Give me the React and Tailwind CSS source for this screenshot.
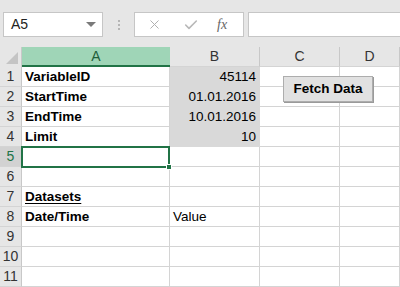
import { X, Check } from "lucide-react";

const cols = [
  { key: "A", w: "w-[148px]" },
  { key: "B", w: "w-[90px]" },
  { key: "C", w: "w-[80px]" },
  { key: "D", w: "w-[60px]" },
];

const data = {
  1: { A: { t: "VariableID", b: true }, B: { t: "45114", r: true, fill: true } },
  2: { A: { t: "StartTime", b: true }, B: { t: "01.01.2016", r: true, fill: true } },
  3: { A: { t: "EndTime", b: true }, B: { t: "10.01.2016", r: true, fill: true } },
  4: { A: { t: "Limit", b: true }, B: { t: "10", r: true, fill: true } },
  7: { A: { t: "Datasets", b: true, u: true } },
  8: { A: { t: "Date/Time", b: true }, B: { t: "Value" } },
};

function Cell({ col, cell }) {
  const fill = cell && cell.fill;
  return (
    <div
      className={`${col.w} h-[20px] shrink-0 border-r border-b flex items-end pb-[1px] px-[3px] ${
        fill ? "bg-[#d9d9d9] border-[#d9d9d9]" : "bg-white border-[#d4d4d4]"
      } ${cell && cell.r ? "justify-end" : "justify-start"}`}
    >
      {cell && (
        <span
          className={`text-[13.5px] leading-[17px] text-black whitespace-nowrap ${cell.b ? "font-bold" : ""} ${
            cell.u ? "underline underline-offset-2" : ""
          }`}
        >
          {cell.t}
        </span>
      )}
    </div>
  );
}

export default function App() {
  const rows = Array.from({ length: 11 }, (_, i) => i + 1);
  return (
    <div className="w-[400px] h-[287px] overflow-hidden bg-[#e6e6e6] relative" style={{ fontFamily: '"Liberation Sans", Arial, sans-serif' }}>
      {/* formula bar */}
      <div className="h-[47px] flex items-start pt-[12px]">
        <div className="ml-[3px] w-[100px] h-[25px] bg-white border border-[#c6c6c6] flex items-center justify-between pl-[7px] pr-[6px]">
          <span className="text-[14px] text-[#222]">A5</span>
          <svg width="10" height="6" viewBox="0 0 10 6"><path d="M0 0 L10 0 L5 5 Z" fill="#7a7a7a" /></svg>
        </div>
        <div className="w-[31px] h-[25px] flex flex-col items-center justify-center gap-[2px]">
          <span className="w-[2px] h-[2px] bg-[#b5b5b5]" />
          <span className="w-[2px] h-[2px] bg-[#b5b5b5]" />
          <span className="w-[2px] h-[2px] bg-[#b5b5b5]" />
        </div>
        <div className="w-[110px] h-[25px] bg-white border border-[#c6c6c6] flex items-center pl-[12px]">
          <X size={15} strokeWidth={1.6} color="#b0b0b0" />
          <Check size={16} strokeWidth={2.4} color="#b8b8b8" className="ml-[21px]" />
          <span className="ml-[18px] text-[14px] italic text-[#666]" style={{ fontFamily: '"Liberation Serif", serif' }}>
            fx
          </span>
        </div>
        <div className="ml-[4px] flex-1 h-[25px] bg-white border border-[#c6c6c6] border-r-0" />
      </div>

      {/* column headers */}
      <div className="flex h-[20px]">
        <div className="w-[22px] h-[20px] shrink-0 border-r border-[#c8c8c8] relative">
          <svg className="absolute right-[3px] bottom-[3px]" width="12" height="12" viewBox="0 0 12 12">
            <path d="M12 0 L12 12 L0 12 Z" fill="#c4c4c4" />
          </svg>
        </div>
        {cols.map((c) => (
          <div
            key={c.key}
            className={`${c.w} h-[20px] shrink-0 flex items-center justify-center text-[14px] ${
              c.key === "A"
                ? "bg-[#9fd5b7] border-b-2 border-[#217346] text-[#1e5e3a]"
                : "border-r border-b border-r-[#c8c8c8] border-b-[#d4d4d4] text-[#333]"
            }`}
          >
            {c.key}
          </div>
        ))}
      </div>

      {/* rows */}
      {rows.map((r) => (
        <div key={r} className="flex">
          <div
            className={`w-[22px] h-[20px] shrink-0 border-r border-b border-r-[#c8c8c8] border-b-[#d4d4d4] flex items-center justify-center text-[14px] ${
              r === 5 ? "bg-[#d2d2d2] text-[#217346]" : "bg-[#e6e6e6] text-[#333]"
            }`}
          >
            {r}
          </div>
          {cols.map((c) => (
            <Cell key={c.key} col={c} cell={data[r] && data[r][c.key]} />
          ))}
        </div>
      ))}

      {/* selection */}
      <div className="absolute left-[21px] top-[146px] w-[149px] h-[22px] border-2 border-[#217346]" />
      <div className="absolute left-[166px] top-[164px] w-[6px] h-[6px] bg-[#217346] border border-white" />

      {/* button */}
      <button className="absolute left-[283px] top-[76px] w-[90px] h-[26px] bg-[#e1e1e1] border border-[#adadad] shadow-[1px_1px_0_#9a9a9a] text-[13.5px] font-bold text-black flex items-center justify-center">
        Fetch Data
      </button>
    </div>
  );
}
